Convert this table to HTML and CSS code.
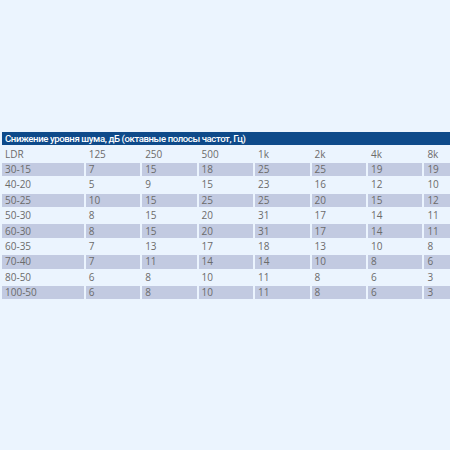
FILE: index.html
```html
<!DOCTYPE html>
<html lang="ru">
<head>
<meta charset="utf-8">
<link rel="stylesheet" href="styles.css">
</head>
<body>
<div class="wrap">
<table class="noise">
  <colgroup><col class="c-ldr"><col class="c-f"><col class="c-f"><col class="c-f"><col class="c-f"><col class="c-f"><col class="c-f"><col class="c-f"></colgroup>
  <tr class="caption"><th colspan="8">Снижение уровня шума, дБ (октавные полосы частот, Гц)</th></tr>
  <tr><td>LDR</td><td>125</td><td>250</td><td>500</td><td>1k</td><td>2k</td><td>4k</td><td>8k</td></tr>
  <tr class="alt"><td>30-15</td><td>7</td><td>15</td><td>18</td><td>25</td><td>25</td><td>19</td><td>19</td></tr>
  <tr><td>40-20</td><td>5</td><td>9</td><td>15</td><td>23</td><td>16</td><td>12</td><td>10</td></tr>
  <tr class="alt"><td>50-25</td><td>10</td><td>15</td><td>25</td><td>25</td><td>20</td><td>15</td><td>12</td></tr>
  <tr><td>50-30</td><td>8</td><td>15</td><td>20</td><td>31</td><td>17</td><td>14</td><td>11</td></tr>
  <tr class="alt"><td>60-30</td><td>8</td><td>15</td><td>20</td><td>31</td><td>17</td><td>14</td><td>11</td></tr>
  <tr><td>60-35</td><td>7</td><td>13</td><td>17</td><td>18</td><td>13</td><td>10</td><td>8</td></tr>
  <tr class="alt"><td>70-40</td><td>7</td><td>11</td><td>14</td><td>14</td><td>10</td><td>8</td><td>6</td></tr>
  <tr><td>80-50</td><td>6</td><td>8</td><td>10</td><td>11</td><td>8</td><td>6</td><td>3</td></tr>
  <tr class="alt"><td>100-50</td><td>6</td><td>8</td><td>10</td><td>11</td><td>8</td><td>6</td><td>3</td></tr>
</table>
</div>
</body>
</html>
```

FILE: styles.css
```css
html, body {
  margin: 0;
  padding: 0;
  background: #ebf4fe;
  overflow: hidden;
}
.wrap {
  width: 450px;
  height: 450px;
  overflow: hidden;
  padding-top: 130px;
  box-sizing: border-box;
}
.noise {
  border-collapse: separate;
  border-spacing: 2px;
  font-family: "Open Sans", "Noto Sans", sans-serif;
  font-size: 10px;
  color: #6b6b6b;
  table-layout: fixed;
  width: 481px;
}
.c-ldr { width: 81px; }
.c-f { width: 54px; }
.noise td, .noise th {
  padding: 0 3px;
  height: 13.4px;
  line-height: 13px;
  text-align: left;
  font-weight: normal;
  white-space: nowrap;
  overflow: hidden;
}
.caption th {
  background: #0e4a8a;
  color: #ffffff;
  font-family: Roboto, "Open Sans", sans-serif;
  font-weight: 500;
  font-size: 9.6px;
  letter-spacing: -0.4px;
}
.alt td {
  background: #c2cae1;
}
```
